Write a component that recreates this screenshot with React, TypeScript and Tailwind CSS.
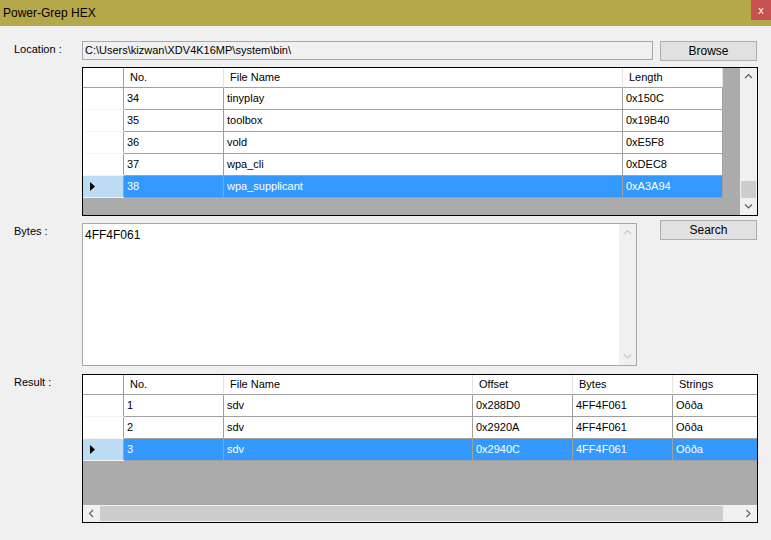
import React from "react";

type Col = { title: string; w: number; last?: boolean };

const fileCols: Col[] = [
  { title: "No.", w: 100 },
  { title: "File Name", w: 399 },
  { title: "Length", w: 100 },
];

const fileRows = [
  ["34", "tinyplay", "0x150C"],
  ["35", "toolbox", "0x19B40"],
  ["36", "vold", "0xE5F8"],
  ["37", "wpa_cli", "0xDEC8"],
  ["38", "wpa_supplicant", "0xA3A94"],
];

const resultCols: Col[] = [
  { title: "No.", w: 100 },
  { title: "File Name", w: 249 },
  { title: "Offset", w: 100 },
  { title: "Bytes", w: 100 },
  { title: "Strings", w: 84, last: true },
];

const resultRows = [
  ["1", "sdv", "0x288D0", "4FF4F061", "Oôða"],
  ["2", "sdv", "0x2920A", "4FF4F061", "Oôða"],
  ["3", "sdv", "0x2940C", "4FF4F061", "Oôða"],
];

function Chevron({ dir, faded }: { dir: "up" | "down" | "left" | "right"; faded?: boolean }) {
  const d =
    dir === "up"
      ? "M1 5 L4.5 1.5 L8 5"
      : dir === "down"
      ? "M1 1.5 L4.5 5 L8 1.5"
      : dir === "left"
      ? "M5 1 L1.5 4.5 L5 8"
      : "M1.5 1 L5 4.5 L1.5 8";
  const vertical = dir === "up" || dir === "down";
  return (
    <svg
      width={vertical ? 9 : 7}
      height={vertical ? 7 : 9}
      viewBox={vertical ? "0 0 9 7" : "0 0 7 9"}
      fill="none"
      stroke={faded ? "#c8c8c8" : "#606060"}
      strokeWidth="1.2"
    >
      <path d={d} />
    </svg>
  );
}

function RowHeader({ selected }: { selected?: boolean }) {
  return (
    <div
      className={`flex h-full w-[41px] shrink-0 items-center border-r border-[#a0a0a0] pl-[7px] ${
        selected ? "bg-[#bcdcf4]" : "bg-white"
      }`}
    >
      {selected && (
        <svg width="5" height="9" viewBox="0 0 5 9">
          <path d="M0 0 L5 4.5 L0 9 Z" fill="#000" />
        </svg>
      )}
    </div>
  );
}

function HeaderRow({ cols }: { cols: Col[] }) {
  return (
    <div className="flex h-[20px] shrink-0">
      <div className="h-full w-[41px] shrink-0 border-r border-b border-[#a0a0a0] bg-white" />
      {cols.map((c) => (
        <div
          key={c.title}
          style={{ width: c.w }}
          className={`flex h-full shrink-0 items-center border-b border-[#a0a0a0] bg-white pl-[6px] ${
            c.last ? "" : "border-r border-r-[#e3e3e3]"
          }`}
        >
          {c.title}
        </div>
      ))}
    </div>
  );
}

function DataRow({ cols, cells, selected }: { cols: Col[]; cells: string[]; selected?: boolean }) {
  return (
    <div className="flex h-[22px] shrink-0">
      <div className="h-full border-b border-[#f4f4f4]">
        <RowHeader selected={selected} />
      </div>
      {cols.map((c, i) => (
        <div
          key={c.title}
          style={{ width: c.w }}
          className={`flex h-full shrink-0 items-center border-b border-[#a0a0a0] pl-[3px] ${
            c.last ? "" : "border-r"
          } ${selected ? "bg-[#3399ff] text-white" : "bg-white text-black"}`}
        >
          {cells[i]}
        </div>
      ))}
    </div>
  );
}

function WinButton({ label }: { label: string }) {
  return (
    <button className="flex h-[20px] w-[97px] items-center justify-center border border-[#adadad] bg-[#e1e1e1] text-[12px] text-black">
      {label}
    </button>
  );
}

export default function App() {
  return (
    <div
      className="flex h-[540px] w-[771px] flex-col bg-[#f0f0f0] text-[11px] text-black"
      style={{ fontFamily: '"Liberation Sans", Arial, sans-serif' }}
    >
      {/* title bar */}
      <div className="flex h-[26px] shrink-0 items-start justify-between bg-[#b5a84b]">
        <div className="pl-[3px] pt-[5px] text-[12px] leading-[16px]">Power-Grep HEX</div>
        <div className="flex h-[20px] w-[20px] items-center justify-center bg-[#c75050] text-[11px] text-white">
          x
        </div>
      </div>

      <div className="flex flex-col pt-[15px]">
        {/* location */}
        <div className="flex items-start">
          <div className="w-[82px] shrink-0 pl-[14px] pt-[1px] leading-[15px]">Location :</div>
          <div className="flex h-[19px] w-[571px] items-center border border-[#a8a8a8] bg-[#f0f0f0] pl-[2px]">
            C:\Users\kizwan\XDV4K16MP\system\bin\
          </div>
          <div className="ml-[7px]">
            <WinButton label="Browse" />
          </div>
        </div>

        {/* file grid */}
        <div className="ml-[82px] mt-[6px] flex h-[149px] w-[676px] border border-black bg-[#ababab]">
          <div className="flex flex-1 flex-col">
            <HeaderRow cols={fileCols} />
            {fileRows.map((r, i) => (
              <DataRow key={r[0]} cols={fileCols} cells={r} selected={i === fileRows.length - 1} />
            ))}
          </div>
          <div className="flex w-[17px] shrink-0 flex-col bg-[#f0f0f0]">
            <div className="flex h-[17px] items-center justify-center">
              <Chevron dir="up" />
            </div>
            <div className="flex flex-1 flex-col justify-end px-[1px]">
              <div className="h-[17px] bg-[#cdcdcd]" />
            </div>
            <div className="flex h-[17px] items-center justify-center">
              <Chevron dir="down" />
            </div>
          </div>
        </div>

        {/* bytes */}
        <div className="mt-[4px] flex items-start">
          <div className="w-[82px] shrink-0 pl-[14px] pt-[4px] leading-[15px]">Bytes :</div>
          <div className="mt-[3px] flex h-[143px] w-[555px] border border-[#a8a8a8] bg-white">
            <div className="flex-1 pl-[2px] pt-[4px] text-[12px] leading-[14px]">4FF4F061</div>
            <div className="flex w-[17px] flex-col justify-between bg-[#f0f0f0] py-[5px]">
              <div className="flex justify-center">
                <Chevron dir="up" faded />
              </div>
              <div className="flex justify-center">
                <Chevron dir="down" faded />
              </div>
            </div>
          </div>
          <div className="ml-[23px]">
            <WinButton label="Search" />
          </div>
        </div>

        {/* result */}
        <div className="mt-[8px] flex items-start">
          <div className="w-[82px] shrink-0 pl-[14px] pt-[1px] leading-[15px]">Result :</div>
          <div className="flex h-[149px] w-[676px] flex-col overflow-hidden border border-black bg-[#ababab]">
            <HeaderRow cols={resultCols} />
            {resultRows.map((r, i) => (
              <DataRow key={r[0]} cols={resultCols} cells={r} selected={i === resultRows.length - 1} />
            ))}
            <div className="flex-1" />
            <div className="flex h-[17px] shrink-0 bg-[#f0f0f0]">
              <div className="flex w-[17px] items-center justify-center">
                <Chevron dir="left" />
              </div>
              <div className="flex flex-1 items-center py-[1px]">
                <div className="h-full w-[623px] bg-[#cdcdcd]" />
              </div>
              <div className="flex w-[17px] items-center justify-center">
                <Chevron dir="right" />
              </div>
            </div>
          </div>
        </div>
      </div>
    </div>
  );
}
